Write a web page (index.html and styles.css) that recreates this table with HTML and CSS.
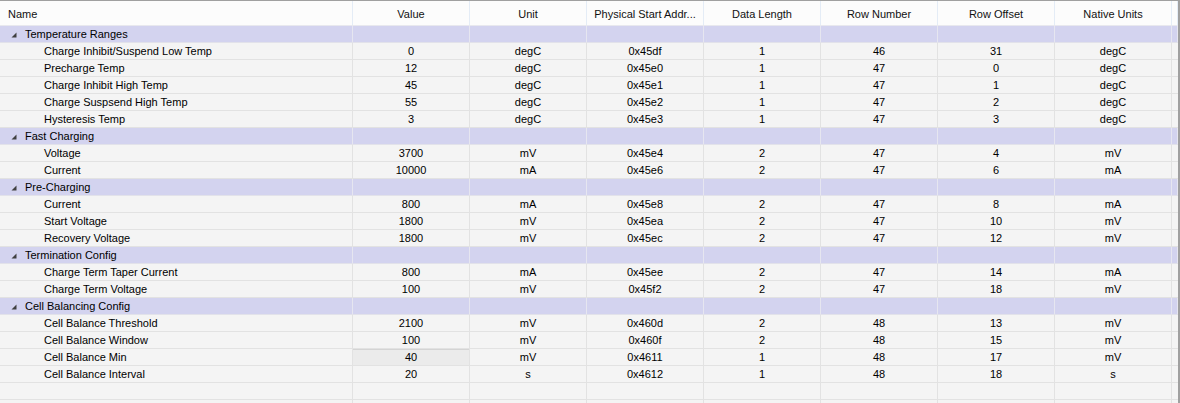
FILE: index.html
```html
<!DOCTYPE html>
<html>
<head>
<meta charset="utf-8">
<link rel="stylesheet" href="styles.css">
</head>
<body>
<div class="grid">
  <div class="row header">
    <div class="c name">Name</div><div class="c">Value</div><div class="c">Unit</div><div class="c">Physical Start Addr...</div><div class="c">Data Length</div><div class="c">Row Number</div><div class="c">Row Offset</div><div class="c">Native Units</div><div class="c fill"></div>
  </div>

  <div class="row group"><div class="c name"><svg class="tri" width="6" height="6" viewBox="0 0 6 6"><polygon points="5.5,0.5 5.5,5.5 0.5,5.5"/></svg>Temperature Ranges</div><div class="c"></div><div class="c"></div><div class="c"></div><div class="c"></div><div class="c"></div><div class="c"></div><div class="c"></div><div class="c fill"></div></div>
  <div class="row"><div class="c name child">Charge Inhibit/Suspend Low Temp</div><div class="c">0</div><div class="c">degC</div><div class="c">0x45df</div><div class="c">1</div><div class="c">46</div><div class="c">31</div><div class="c">degC</div><div class="c fill"></div></div>
  <div class="row"><div class="c name child">Precharge Temp</div><div class="c">12</div><div class="c">degC</div><div class="c">0x45e0</div><div class="c">1</div><div class="c">47</div><div class="c">0</div><div class="c">degC</div><div class="c fill"></div></div>
  <div class="row"><div class="c name child">Charge Inhibit High Temp</div><div class="c">45</div><div class="c">degC</div><div class="c">0x45e1</div><div class="c">1</div><div class="c">47</div><div class="c">1</div><div class="c">degC</div><div class="c fill"></div></div>
  <div class="row"><div class="c name child">Charge Suspsend High Temp</div><div class="c">55</div><div class="c">degC</div><div class="c">0x45e2</div><div class="c">1</div><div class="c">47</div><div class="c">2</div><div class="c">degC</div><div class="c fill"></div></div>
  <div class="row"><div class="c name child">Hysteresis Temp</div><div class="c">3</div><div class="c">degC</div><div class="c">0x45e3</div><div class="c">1</div><div class="c">47</div><div class="c">3</div><div class="c">degC</div><div class="c fill"></div></div>

  <div class="row group"><div class="c name"><svg class="tri" width="6" height="6" viewBox="0 0 6 6"><polygon points="5.5,0.5 5.5,5.5 0.5,5.5"/></svg>Fast Charging</div><div class="c"></div><div class="c"></div><div class="c"></div><div class="c"></div><div class="c"></div><div class="c"></div><div class="c"></div><div class="c fill"></div></div>
  <div class="row"><div class="c name child">Voltage</div><div class="c">3700</div><div class="c">mV</div><div class="c">0x45e4</div><div class="c">2</div><div class="c">47</div><div class="c">4</div><div class="c">mV</div><div class="c fill"></div></div>
  <div class="row"><div class="c name child">Current</div><div class="c">10000</div><div class="c">mA</div><div class="c">0x45e6</div><div class="c">2</div><div class="c">47</div><div class="c">6</div><div class="c">mA</div><div class="c fill"></div></div>

  <div class="row group"><div class="c name"><svg class="tri" width="6" height="6" viewBox="0 0 6 6"><polygon points="5.5,0.5 5.5,5.5 0.5,5.5"/></svg>Pre-Charging</div><div class="c"></div><div class="c"></div><div class="c"></div><div class="c"></div><div class="c"></div><div class="c"></div><div class="c"></div><div class="c fill"></div></div>
  <div class="row"><div class="c name child">Current</div><div class="c">800</div><div class="c">mA</div><div class="c">0x45e8</div><div class="c">2</div><div class="c">47</div><div class="c">8</div><div class="c">mA</div><div class="c fill"></div></div>
  <div class="row"><div class="c name child">Start Voltage</div><div class="c">1800</div><div class="c">mV</div><div class="c">0x45ea</div><div class="c">2</div><div class="c">47</div><div class="c">10</div><div class="c">mV</div><div class="c fill"></div></div>
  <div class="row"><div class="c name child">Recovery Voltage</div><div class="c">1800</div><div class="c">mV</div><div class="c">0x45ec</div><div class="c">2</div><div class="c">47</div><div class="c">12</div><div class="c">mV</div><div class="c fill"></div></div>

  <div class="row group"><div class="c name"><svg class="tri" width="6" height="6" viewBox="0 0 6 6"><polygon points="5.5,0.5 5.5,5.5 0.5,5.5"/></svg>Termination Config</div><div class="c"></div><div class="c"></div><div class="c"></div><div class="c"></div><div class="c"></div><div class="c"></div><div class="c"></div><div class="c fill"></div></div>
  <div class="row"><div class="c name child">Charge Term Taper Current</div><div class="c">800</div><div class="c">mA</div><div class="c">0x45ee</div><div class="c">2</div><div class="c">47</div><div class="c">14</div><div class="c">mA</div><div class="c fill"></div></div>
  <div class="row"><div class="c name child">Charge Term Voltage</div><div class="c">100</div><div class="c">mV</div><div class="c">0x45f2</div><div class="c">2</div><div class="c">47</div><div class="c">18</div><div class="c">mV</div><div class="c fill"></div></div>

  <div class="row group"><div class="c name"><svg class="tri" width="6" height="6" viewBox="0 0 6 6"><polygon points="5.5,0.5 5.5,5.5 0.5,5.5"/></svg>Cell Balancing Config</div><div class="c"></div><div class="c"></div><div class="c"></div><div class="c"></div><div class="c"></div><div class="c"></div><div class="c"></div><div class="c fill"></div></div>
  <div class="row"><div class="c name child">Cell Balance Threshold</div><div class="c">2100</div><div class="c">mV</div><div class="c">0x460d</div><div class="c">2</div><div class="c">48</div><div class="c">13</div><div class="c">mV</div><div class="c fill"></div></div>
  <div class="row"><div class="c name child">Cell Balance Window</div><div class="c">100</div><div class="c">mV</div><div class="c">0x460f</div><div class="c">2</div><div class="c">48</div><div class="c">15</div><div class="c">mV</div><div class="c fill"></div></div>
  <div class="row"><div class="c name child">Cell Balance Min</div><div class="c selected">40</div><div class="c">mV</div><div class="c">0x4611</div><div class="c">1</div><div class="c">48</div><div class="c">17</div><div class="c">mV</div><div class="c fill"></div></div>
  <div class="row"><div class="c name child">Cell Balance Interval</div><div class="c">20</div><div class="c">s</div><div class="c">0x4612</div><div class="c">1</div><div class="c">48</div><div class="c">18</div><div class="c">s</div><div class="c fill"></div></div>
  <div class="row"><div class="c name"></div><div class="c"></div><div class="c"></div><div class="c"></div><div class="c"></div><div class="c"></div><div class="c"></div><div class="c"></div><div class="c fill"></div></div>
  <div class="row"><div class="c name"></div><div class="c"></div><div class="c"></div><div class="c"></div><div class="c"></div><div class="c"></div><div class="c"></div><div class="c"></div><div class="c fill"></div></div>
</div>
</body>
</html>
```

FILE: styles.css
```css
html, body {
  margin: 0;
  padding: 0;
  background: #f4f4f4;
  height: 403px;
  overflow: hidden;
}

.grid {
  width: 1178px;
  border-top: 1px solid #a0a0a0;
  border-right: 2px solid #a0a0a0;
  font-family: "Liberation Sans", Arial, sans-serif;
  font-size: 11px;
  color: #000;
}

.row {
  display: grid;
  grid-template-columns: 353px repeat(7, 117px) 1fr;
  height: 17px;
  background: #f4f4f4;
  border-bottom: 1px solid #e2e2e2;
  box-sizing: border-box;
}

.c {
  border-right: 1px solid #e2e2e2;
  text-align: center;
  line-height: 15px;
  padding-top: 1px;
  white-space: nowrap;
  overflow: hidden;
}

.c.fill {
  border-right: none;
}

.c.name {
  text-align: left;
  padding-left: 8px;
}

.c.name.child {
  padding-left: 44px;
}

.header {
  height: 25px;
  background: #fcfcfc;
  border-bottom: 1px solid #e8e8ee;
}

.header .c {
  line-height: 24px;
  padding-top: 1px;
  border-right: 1px solid #e4ecf6;
  color: #111;
}

.header .c.name {
  padding-left: 8px;
}

.group {
  background: #d3d3ef;
  border-bottom: 1px solid #e2e2ea;
}

.group .c {
  border-right: 1px solid #e6e6f0;
}

.group .c.name {
  padding-left: 11px;
  display: flex;
  align-items: center;
}

.tri {
  fill: #404040;
  margin-right: 8px;
}

.c.selected {
  background: #ebebeb;
  box-shadow: inset 0 1px 0 #d4d4d4;
}
```
